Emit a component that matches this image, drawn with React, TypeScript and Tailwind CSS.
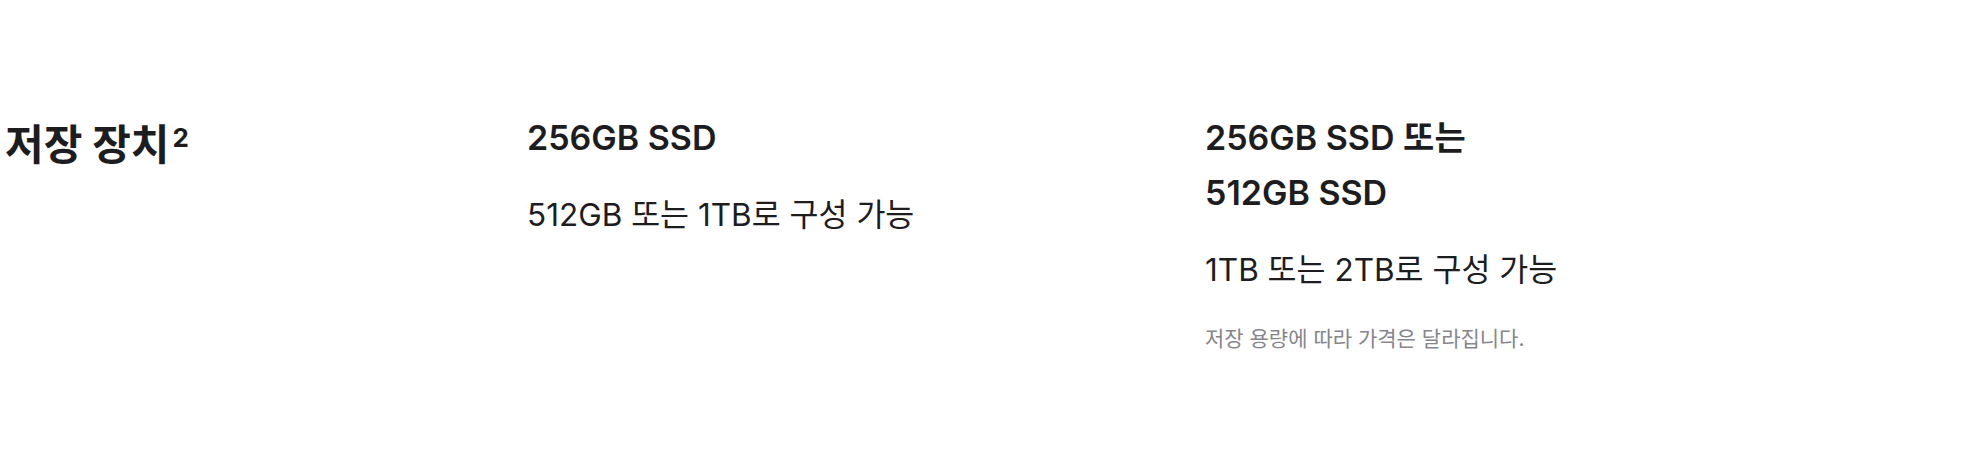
import React from 'react';

const font = { fontFamily: '"Inter", "Noto Sans CJK KR", sans-serif' };

export default function App() {
  return (
    <div className="w-[1972px] h-[472px] bg-white text-[#1d1d1f]" style={font}>
      <div className="grid grid-cols-[522px_678px_678px] pl-[5px] pt-[110px]">
        <div className="pt-[7px]">
          <h2 className="text-[42px] font-bold leading-[55px]">
            저장 장치
            <span className="relative top-[-13px] ml-[3px] align-baseline text-[26px] font-bold">2</span>
          </h2>
        </div>
        <div>
          <p className="text-[34px] font-semibold leading-[55px]">256GB SSD</p>
          <p className="mt-[29px] text-[31.5px] leading-[42px]">512GB 또는 1TB로 구성 가능</p>
        </div>
        <div>
          <p className="text-[34px] font-semibold leading-[55px]">
            256GB SSD 또는
            <br />
            512GB SSD
          </p>
          <p className="mt-[29px] text-[31.5px] leading-[42px]">1TB 또는 2TB로 구성 가능</p>
          <p className="mt-[32px] text-[21px] leading-[32px] text-[#86868b]">저장 용량에 따라 가격은 달라집니다.</p>
        </div>
      </div>
    </div>
  );
}
